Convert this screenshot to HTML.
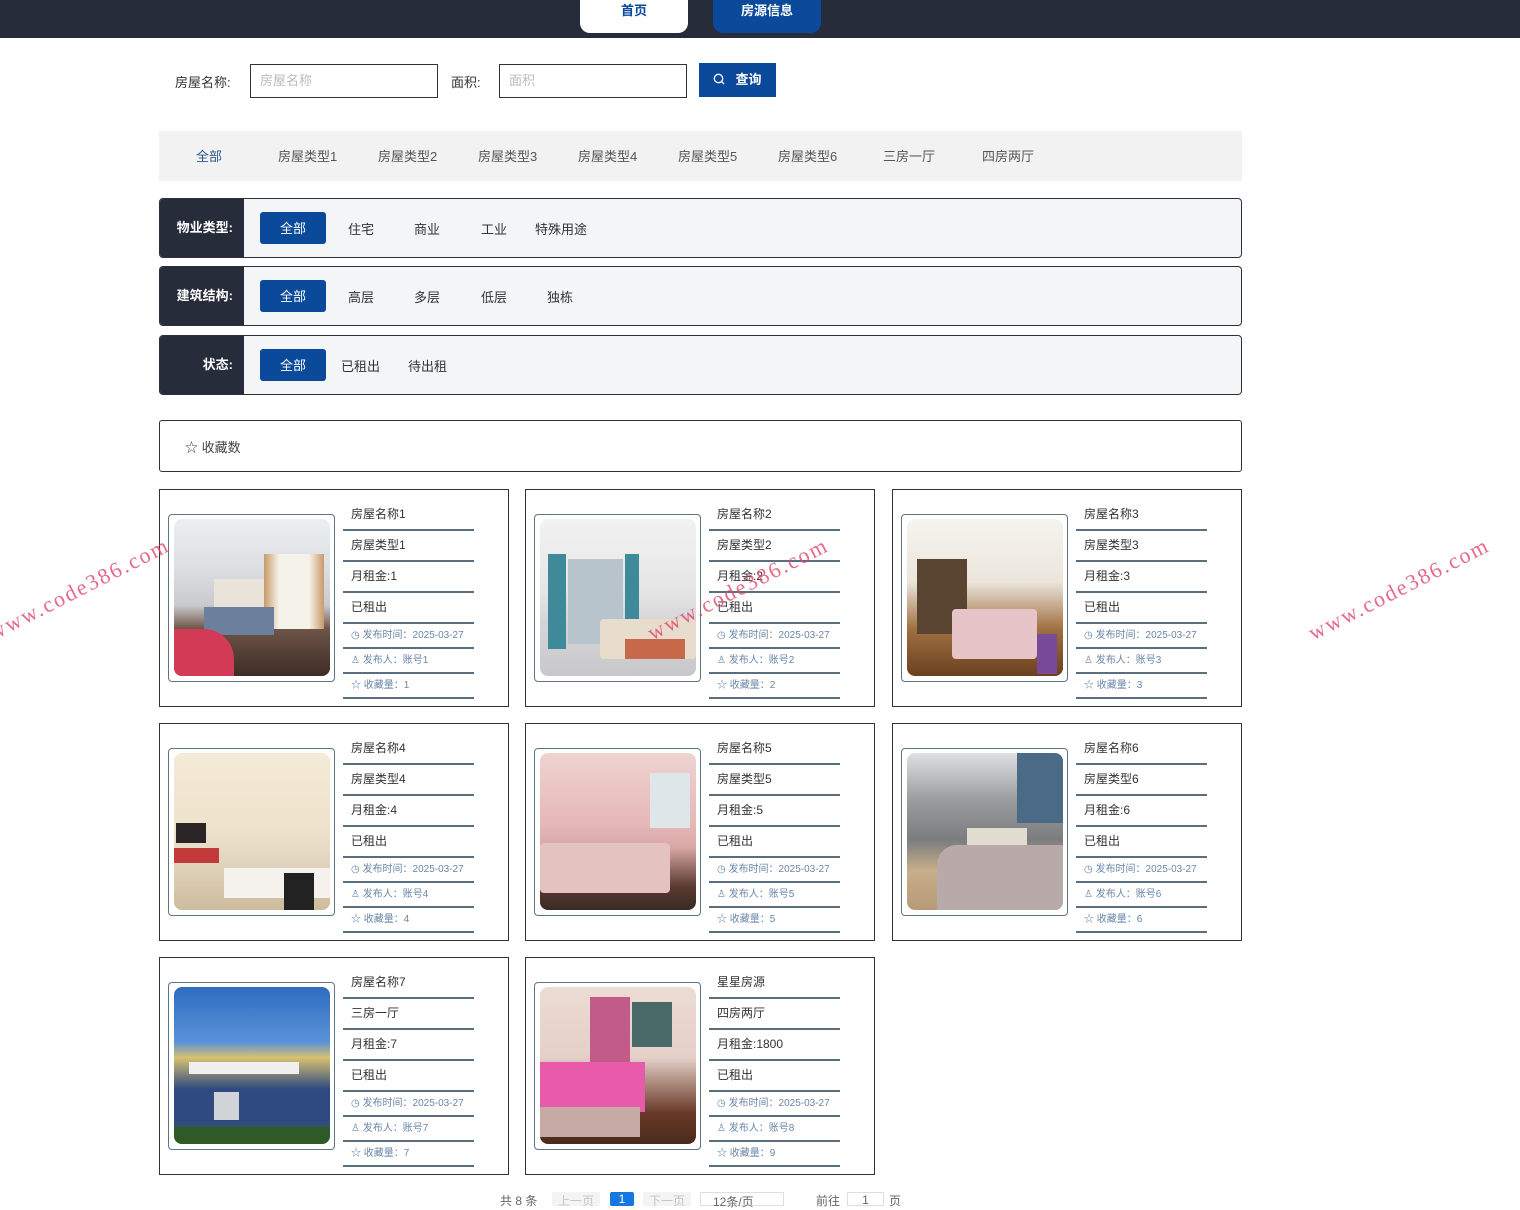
<!DOCTYPE html>
<html><head><meta charset="utf-8">
<style>
*{box-sizing:border-box;margin:0;padding:0}
body{width:1520px;height:1205px;overflow:hidden;background:#fff;font-family:"Liberation Sans","Noto Sans CJK SC",sans-serif;color:#333;position:relative}
.nav{position:absolute;left:0;top:0;width:1520px;height:38px;background:#272c3b}
.nb{position:absolute;top:0;height:33px;width:108px;border-radius:0 0 10px 10px;font-size:13px;font-weight:bold;text-align:center;line-height:22px}
.lbl{position:absolute;font-size:13px;color:#333}
.inp{position:absolute;top:64px;height:34px;border:1px solid #333;font-size:13px;color:#bbb;padding-left:9px;line-height:32px}
.btn{position:absolute;left:699px;top:63px;width:77px;height:34px;background:#0b4a9a;color:#fff;font-size:13px;font-weight:bold;line-height:34px;text-align:center}
.cat{position:absolute;left:159px;top:131px;width:1083px;height:50px;background:#f2f2f2}
.cat span{position:absolute;top:15px;font-size:13px;color:#555}
.fr{position:absolute;left:159px;width:1083px;height:60px;border:1px solid #2a3040;border-radius:4px;background:#f4f5f7;overflow:hidden}
.fr .h{position:absolute;left:0;top:0;width:84px;height:100%;background:#272c3b;color:#fff;font-size:13px;font-weight:bold;text-align:right;padding-right:11px;line-height:58px}
.fr .a{position:absolute;left:100px;top:13px;width:66px;height:32px;background:#0b4a9a;color:#fff;border-radius:3px;font-size:13px;line-height:33px;text-align:center}
.fr span{position:absolute;top:20px;font-size:13px;color:#333}
.fav{position:absolute;left:159px;top:420px;width:1083px;height:52px;border:1px solid #333;border-radius:3px;font-size:13px;color:#444;padding:16px 0 0 25px}
.card{position:absolute;width:350px;height:218px;border:1px solid #333}
.ib{position:absolute;left:8px;top:24px;width:167px;height:168px;border:1px solid #5f7482;border-radius:4px}
.im{position:absolute;left:5px;top:4px;width:156px;height:157px;border-radius:8px;overflow:hidden}
.tx{position:absolute;left:183px;top:10px;width:131px}
.tx div{border-bottom:2px solid #5a6e7e;font-size:12px;color:#333;padding-left:8px}
.tx .b{height:31px;line-height:29px}
.tx .s{height:25px;line-height:24px;font-size:10px;color:#6a86a8}
.wm{position:absolute;color:#e0456a;font-family:"Liberation Serif",serif;font-size:22px;letter-spacing:2px;transform:rotate(-27deg);transform-origin:left bottom;white-space:nowrap;opacity:.8}
.pg{position:absolute;top:1192px;font-size:12px;color:#666}
</style></head><body>
<div class="nav">
<div class="nb" style="left:580px;background:#fff;color:#0b4a9a">首页</div>
<div class="nb" style="left:713px;background:#0b4a9a;color:#fff">房源信息</div>
</div>
<div class="lbl" style="left:175px;top:72px">房屋名称:</div>
<div class="inp" style="left:250px;width:188px">房屋名称</div>
<div class="lbl" style="left:451px;top:72px">面积:</div>
<div class="inp" style="left:499px;width:188px">面积</div>
<div class="btn"><svg width="12" height="12" viewBox="0 0 12 12" style="vertical-align:-1px;margin-right:10px"><circle cx="5.5" cy="5.5" r="4.2" fill="none" stroke="#fff" stroke-width="1.3"/><path d="M8.5 8.5L11 11" stroke="#fff" stroke-width="1.3"/></svg>查询</div>

<div class="cat">
<span style="left:37px;color:#2a5a8a">全部</span><span style="left:119px">房屋类型1</span><span style="left:219px">房屋类型2</span><span style="left:319px">房屋类型3</span><span style="left:419px">房屋类型4</span><span style="left:519px">房屋类型5</span><span style="left:619px">房屋类型6</span><span style="left:724px">三房一厅</span><span style="left:823px">四房两厅</span>
</div>

<div class="fr" style="top:198px"><div class="h">物业类型:</div><div class="a">全部</div><span style="left:188px">住宅</span><span style="left:254px">商业</span><span style="left:321px">工业</span><span style="left:375px">特殊用途</span></div>
<div class="fr" style="top:266px"><div class="h">建筑结构:</div><div class="a">全部</div><span style="left:188px">高层</span><span style="left:254px">多层</span><span style="left:321px">低层</span><span style="left:387px">独栋</span></div>
<div class="fr" style="top:335px"><div class="h">状态:</div><div class="a">全部</div><span style="left:181px">已租出</span><span style="left:248px">待出租</span></div>

<div class="fav">☆ 收藏数</div>

<div class="card" style="left:159px;top:489px"><div class="ib"><div class="im" style="background:linear-gradient(180deg,#eceff2 0%,#dde0e3 30%,#c9cacd 55%,#6e5448 70%,#3d2c26 100%)"><div style="position:absolute;left:40px;top:60px;width:70px;height:45px;background:#e9e3da"></div><div style="position:absolute;left:90px;top:35px;width:60px;height:75px;background:linear-gradient(90deg,#c89a6a,#f5f2ea 25%,#f5f2ea 75%,#c89a6a)"></div><div style="position:absolute;left:30px;top:88px;width:70px;height:28px;background:#6c7f9c"></div><div style="position:absolute;left:0;top:110px;width:60px;height:47px;background:#d23a55;border-radius:0 30px 0 0"></div></div></div>
<div class="tx"><div class="b">房屋名称1</div><div class="b">房屋类型1</div><div class="b">月租金:1</div><div class="b">已租出</div><div class="s">◷ 发布时间：2025-03-27</div><div class="s">♙ 发布人：账号1</div><div class="s">☆ 收藏量：1</div></div></div>

<div class="card" style="left:525px;top:489px"><div class="ib"><div class="im" style="background:linear-gradient(180deg,#f2f2f2 0%,#e6e6e6 45%,#d6d6d8 65%,#c8c8ca 100%)"><div style="position:absolute;left:8px;top:35px;width:18px;height:95px;background:#3f8a9a"></div><div style="position:absolute;left:28px;top:40px;width:55px;height:85px;background:#b8c4cc"></div><div style="position:absolute;left:85px;top:35px;width:14px;height:95px;background:#3f8a9a"></div><div style="position:absolute;left:60px;top:100px;width:96px;height:40px;background:#e8dccd;border-radius:4px"></div><div style="position:absolute;left:85px;top:120px;width:60px;height:20px;background:#c86a4a"></div></div></div>
<div class="tx"><div class="b">房屋名称2</div><div class="b">房屋类型2</div><div class="b">月租金:2</div><div class="b">已租出</div><div class="s">◷ 发布时间：2025-03-27</div><div class="s">♙ 发布人：账号2</div><div class="s">☆ 收藏量：2</div></div></div>

<div class="card" style="left:892px;top:489px"><div class="ib"><div class="im" style="background:linear-gradient(180deg,#f6f4ef 0%,#ebe6dc 40%,#a07040 70%,#6a4020 100%)"><div style="position:absolute;left:10px;top:40px;width:50px;height:75px;background:#5a4432"></div><div style="position:absolute;left:45px;top:90px;width:85px;height:50px;background:#e6c4c8;border-radius:4px"></div><div style="position:absolute;left:130px;top:115px;width:20px;height:40px;background:#7a4a9a"></div></div></div>
<div class="tx"><div class="b">房屋名称3</div><div class="b">房屋类型3</div><div class="b">月租金:3</div><div class="b">已租出</div><div class="s">◷ 发布时间：2025-03-27</div><div class="s">♙ 发布人：账号3</div><div class="s">☆ 收藏量：3</div></div></div>

<div class="card" style="left:159px;top:723px"><div class="ib"><div class="im" style="background:linear-gradient(180deg,#f3ead8 0%,#efe3cc 45%,#e8dcc8 60%,#cdbb9c 100%)"><div style="position:absolute;left:2px;top:70px;width:30px;height:20px;background:#2b2426"></div><div style="position:absolute;left:0;top:95px;width:45px;height:15px;background:#c23a3a"></div><div style="position:absolute;left:50px;top:115px;width:106px;height:30px;background:#f5f2ee"></div><div style="position:absolute;left:110px;top:120px;width:30px;height:37px;background:#222"></div></div></div>
<div class="tx"><div class="b">房屋名称4</div><div class="b">房屋类型4</div><div class="b">月租金:4</div><div class="b">已租出</div><div class="s">◷ 发布时间：2025-03-27</div><div class="s">♙ 发布人：账号4</div><div class="s">☆ 收藏量：4</div></div></div>

<div class="card" style="left:525px;top:723px"><div class="ib"><div class="im" style="background:linear-gradient(180deg,#eed3d0 0%,#e6b8b8 45%,#d9a8a6 60%,#5a3a30 85%,#3a2a22 100%)"><div style="position:absolute;left:110px;top:20px;width:40px;height:55px;background:#dfe6ea"></div><div style="position:absolute;left:0;top:90px;width:130px;height:50px;background:#e3c2c0;border-radius:4px"></div></div></div>
<div class="tx"><div class="b">房屋名称5</div><div class="b">房屋类型5</div><div class="b">月租金:5</div><div class="b">已租出</div><div class="s">◷ 发布时间：2025-03-27</div><div class="s">♙ 发布人：账号5</div><div class="s">☆ 收藏量：5</div></div></div>

<div class="card" style="left:892px;top:723px"><div class="ib"><div class="im" style="background:linear-gradient(180deg,#dfe0e2 0%,#9a9c9e 30%,#7a7c7e 55%,#c8ae8a 75%,#b89a78 100%)"><div style="position:absolute;left:110px;top:0;width:46px;height:70px;background:#4b6a86"></div><div style="position:absolute;left:60px;top:75px;width:60px;height:30px;background:#e0dcd0"></div><div style="position:absolute;left:30px;top:92px;width:126px;height:65px;background:#b8aaa8;border-radius:20px 0 0 0"></div></div></div>
<div class="tx"><div class="b">房屋名称6</div><div class="b">房屋类型6</div><div class="b">月租金:6</div><div class="b">已租出</div><div class="s">◷ 发布时间：2025-03-27</div><div class="s">♙ 发布人：账号6</div><div class="s">☆ 收藏量：6</div></div></div>

<div class="card" style="left:159px;top:957px"><div class="ib"><div class="im" style="background:linear-gradient(180deg,#2e6cc0 0%,#5a92d8 35%,#d8c070 45%,#2e4a80 65%,#2e4a80 85%,#3a6a30 100%)"><div style="position:absolute;left:15px;top:75px;width:110px;height:12px;background:#f0f0f0"></div><div style="position:absolute;left:40px;top:105px;width:25px;height:28px;background:#d0d4d8"></div><div style="position:absolute;left:0;top:140px;width:156px;height:17px;background:#2f5a28"></div></div></div>
<div class="tx"><div class="b">房屋名称7</div><div class="b">三房一厅</div><div class="b">月租金:7</div><div class="b">已租出</div><div class="s">◷ 发布时间：2025-03-27</div><div class="s">♙ 发布人：账号7</div><div class="s">☆ 收藏量：7</div></div></div>

<div class="card" style="left:525px;top:957px"><div class="ib"><div class="im" style="background:linear-gradient(180deg,#ecdcd4 0%,#e4d0c8 45%,#6a3a28 80%,#4a2a1e 100%)"><div style="position:absolute;left:50px;top:10px;width:40px;height:70px;background:#c25a8a"></div><div style="position:absolute;left:92px;top:15px;width:40px;height:45px;background:#4a6a6a"></div><div style="position:absolute;left:0;top:75px;width:105px;height:50px;background:#e85aaa"></div><div style="position:absolute;left:0;top:120px;width:100px;height:30px;background:#c8aaa4"></div></div></div>
<div class="tx"><div class="b">星星房源</div><div class="b">四房两厅</div><div class="b">月租金:1800</div><div class="b">已租出</div><div class="s">◷ 发布时间：2025-03-27</div><div class="s">♙ 发布人：账号8</div><div class="s">☆ 收藏量：9</div></div></div>

<div class="wm" style="left:-4px;top:620px">www.code386.com</div>
<div class="wm" style="left:655px;top:620px">www.code386.com</div>
<div class="wm" style="left:1316px;top:620px">www.code386.com</div>

<div class="pg" style="left:500px">共 8 条</div>
<div class="pg" style="left:552px;top:1192px;width:48px;height:14px;background:#f4f4f5;color:#c0c4cc;text-align:center">上一页</div>
<div class="pg" style="left:610px;top:1192px;width:24px;height:14px;background:#1677e0;color:#fff;text-align:center;border-radius:2px">1</div>
<div class="pg" style="left:643px;top:1192px;width:48px;height:14px;background:#f4f4f5;color:#c0c4cc;text-align:center">下一页</div>
<div class="pg" style="left:700px;top:1192px;width:84px;height:14px;border:1px solid #dcdfe6;padding-left:12px">12条/页</div>
<div class="pg" style="left:816px">前往</div>
<div class="pg" style="left:847px;top:1192px;width:37px;height:14px;border:1px solid #dcdfe6;text-align:center">1</div>
<div class="pg" style="left:889px">页</div>
</body></html>
